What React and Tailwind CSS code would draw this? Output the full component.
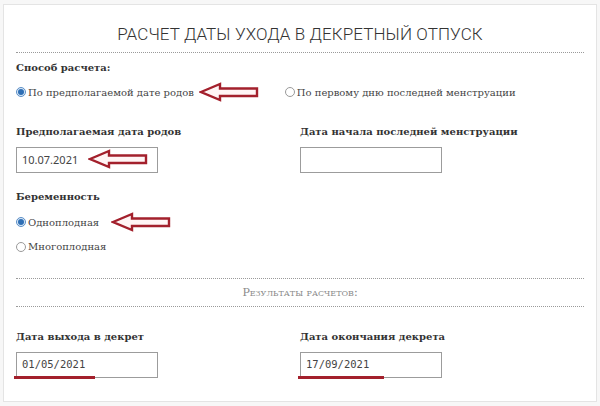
import React from 'react';

const serif = { fontFamily: '"DejaVu Serif", "Liberation Serif", serif' };

function Arrow({ className }) {
  return (
    <svg className={className} width="60" height="20" viewBox="0 0 60 20" fill="none">
      <polygon
        points="2,10 21,2 21,6.5 58,6.5 58,14 21,14 21,18"
        fill="#fff5f5"
        stroke="#a3202c"
        strokeWidth="2.4"
        strokeLinejoin="miter"
      />
    </svg>
  );
}

function Radio({ checked }) {
  return checked ? (
    <span className="inline-flex h-[10px] w-[10px] shrink-0 items-center justify-center rounded-full border border-[#5b8fc7] bg-[#dbe9f7]">
      <span className="h-[6px] w-[6px] rounded-full bg-[#2f6fb5]" />
    </span>
  ) : (
    <span className="inline-block h-[10px] w-[10px] shrink-0 rounded-full border border-[#9a9a9a] bg-white" />
  );
}

function Label({ children }) {
  return (
    <div className="text-[10px] font-bold leading-none text-[#333]" style={serif}>
      {children}
    </div>
  );
}

function Field({ value, mono }) {
  return (
    <div
      className={`flex h-[26px] w-[142px] items-center border border-[#9c9c9c] bg-white pl-[5px] text-[#444] ${
        mono ? 'text-[10.5px]' : 'text-[11px]'
      }`}
      style={{ fontFamily: mono ? '"DejaVu Sans Mono", monospace' : '"Noto Sans", sans-serif' }}
    >
      {value}
    </div>
  );
}

export default function App() {
  return (
    <div className="h-[406px] w-[600px] bg-[#f7f7f7] pl-[3px] pr-[3px] pt-[4px]">
      <div className="h-[398px] border border-[#e4e4e4] bg-white px-[12px]">
        <h1
          className="pt-[21px] text-center text-[17px] font-light leading-none tracking-[0.1px] text-[#333]"
          style={{ fontFamily: 'Roboto, sans-serif' }}
        >
          РАСЧЕТ ДАТЫ УХОДА В ДЕКРЕТНЫЙ ОТПУСК
        </h1>
        <div className="mt-[9px] border-t border-dotted border-[#9a9a9a]" />

        <div className="mt-[10px]">
          <Label>Способ расчета:</Label>
        </div>
        <div className="mt-[9px] flex items-center text-[10px] text-[#444]" style={serif}>
          <Radio checked />
          <span className="ml-[2px]">По предполагаемой дате родов</span>
          <Arrow className="ml-[5px]" />
          <span className="ml-[26px] flex items-center">
            <Radio />
            <span className="ml-[2px]">По первому дню последней менструации</span>
          </span>
        </div>

        <div className="mt-[25px] grid grid-cols-2">
          <div>
            <Label>Предполагаемая дата родов</Label>
            <div className="mt-[10px] flex items-center">
              <Field value="10.07.2021" />
            </div>
          </div>
          <div>
            <Label>Дата начала последней менструации</Label>
            <div className="mt-[10px]">
              <Field value="" />
            </div>
          </div>
        </div>
        <div className="relative">
          <Arrow className="absolute left-[72px] top-[-24px]" />
        </div>

        <div className="mt-[19px]">
          <Label>Беременность</Label>
        </div>
        <div className="mt-[10px] flex items-center text-[10px] text-[#444]" style={serif}>
          <Radio checked />
          <span className="ml-[2px]">Одноплодная</span>
          <Arrow className="ml-[12px]" />
        </div>
        <div className="mt-[7px] flex items-center text-[10px] text-[#444]" style={serif}>
          <Radio />
          <span className="ml-[2px]">Многоплодная</span>
        </div>

        <div className="mt-[24px] border-t border-dotted border-[#9a9a9a]" />
        <div
          className="py-[8px] text-center text-[11px] leading-none text-[#8a8a8a]"
          style={{ ...serif, fontVariant: 'small-caps' }}
        >
          Результаты расчетов:
        </div>
        <div className="border-t border-dotted border-[#9a9a9a]" />

        <div className="mt-[25px] grid grid-cols-2">
          <div>
            <Label>Дата выхода в декрет</Label>
            <div className="mt-[10px]">
              <Field value="01/05/2021" mono />
              <div className="ml-[-2px] mt-[-2px] h-[3px] w-[81px] bg-[#a3202c]" />
            </div>
          </div>
          <div>
            <Label>Дата окончания декрета</Label>
            <div className="mt-[10px]">
              <Field value="17/09/2021" mono />
              <div className="ml-[-2px] mt-[-2px] h-[3px] w-[86px] bg-[#a3202c]" />
            </div>
          </div>
        </div>
      </div>
    </div>
  );
}
